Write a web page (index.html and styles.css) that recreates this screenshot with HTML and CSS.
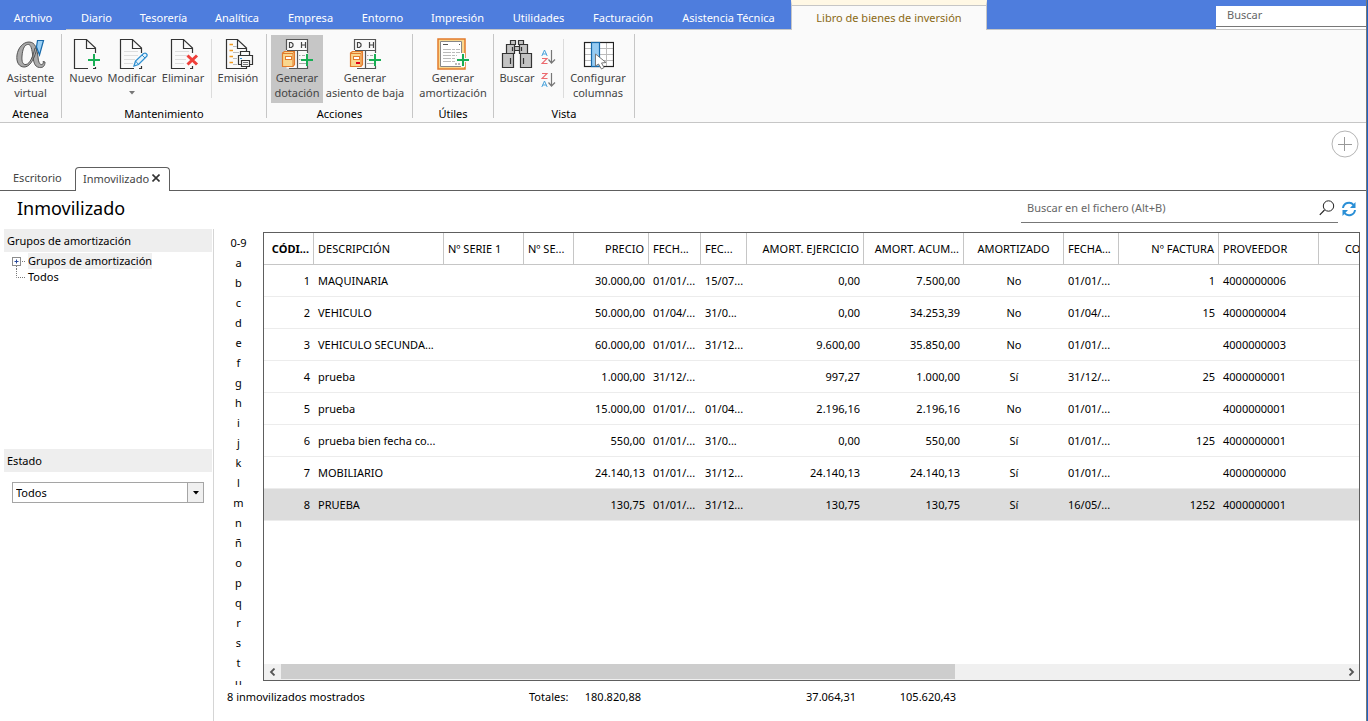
FILE: index.html
```html
<!DOCTYPE html>
<html lang="es">
<head>
<meta charset="utf-8">
<title>Inmovilizado</title>
<link rel="stylesheet" href="styles.css">
</head>
<body>
<svg class="defs" aria-hidden="true">
  <symbol id="page" viewBox="0 0 32 32"><path d="M25.5 15V10L16.5 1.5H4.5V30.5H18M25.5 28V30.5H23M16.5 2V10.5H25" fill="none" stroke="#333" stroke-width="1.2"/></symbol>
  <symbol id="page-lines" viewBox="0 0 32 32"><path d="M8 13.5H22M8 17.5H22M8 21.5H19M8 25.5H17" stroke="#ddd" fill="none"/></symbol>
  <symbol id="plus" viewBox="0 0 12 12"><path d="M6 0V12M0 6H12" stroke="#18ae54" stroke-width="2" fill="none"/></symbol>
  <symbol id="ledger" viewBox="0 0 32 32">
    <rect x="5.5" y="1.5" width="21" height="29" fill="#fafafa"/>
    <path d="M26.5 15V1.5H5.5V12M8 30.5H26.5V28M6 12.5H26M16.5 13V30" fill="none" stroke="#555" stroke-width="1.2"/>
    <path d="M18 17.5H19.5M18 21.5H19.5M18 25.5H25M21 17.5H24" stroke="#aaa" fill="none"/>
    <path d="M8.5 4.5V9.5H10.5L12 8V6L10.5 4.5ZM20.5 4V10M24.5 4V10M20.5 7H24.5" fill="none" stroke="#444" stroke-width="1.2"/>
    <path d="M1.5 15L3.5 13.5H13.5V26.5L12 28.5H1.5Z" fill="#f9d78f" stroke="#e27b2c" stroke-width="1.2"/>
    <path d="M1.5 15.5H12V28M12 15.5L13.5 13.5" fill="none" stroke="#e27b2c"/>
    <rect x="4.500" y="18.500" width="6" height="3" fill="#fff" stroke="#e27b2c"/>
  </symbol>
</svg>
<div class="app">
  <header class="menubar">
    <nav class="menu">
      <button class="file">Archivo</button><button>Diario</button><button>Tesorería</button><button>Analítica</button><button>Empresa</button><button>Entorno</button><button>Impresión</button><button>Utilidades</button><button>Facturación</button><button>Asistencia Técnica</button><button class="current">Libro de bienes de inversión</button>
    </nav>
    <div class="topsearch"><input type="text" placeholder="Buscar" aria-label="Buscar"></div>
  </header>

  <section class="ribbon">
    <div class="group">
      <div class="tools tools-atenea">
        <button class="tool"><svg viewBox="0 0 32 32"><path d="M22 10C20 19 16 28 10 29C4 29.500 1 24 2 17C3 10 8 4 14 4C20.500 4 22 11 23 19C23.500 25 25 27 27 26.500C28.500 26 28.500 24.500 28 23.500L30 24C30 28 28 30 24.500 29.500C19 29 18.500 23 17.500 16C16.500 9 15.500 6 12.500 6.500C9 7 7.500 12 7 18C6.500 24 8 27 11 26.500C15 26 18 18 20 10Z" fill="#aaa" stroke="#555"/><path d="M22.500 2.500H28.500L24.500 17L21.500 9Z" fill="#9bd0f5" stroke="#1769aa" stroke-width="1.200"/></svg><span>Asistente<br>virtual</span></button>
      </div>
      <h2>Atenea</h2>
    </div>
    <div class="group">
      <div class="tools tools-edit">
        <button class="tool"><svg viewBox="0 0 32 32"><use href="#page" width="32" height="32"/><path d="M17 22H31M24.500 15V29" stroke="#fafafa" stroke-width="5"/><use href="#plus" x="18" y="16" width="12" height="12"/></svg><span>Nuevo</span></button>
        <button class="tool"><svg viewBox="0 0 32 32"><use href="#page" width="32" height="32"/><use href="#page-lines" width="32" height="32"/><path d="M18 28L19.5 23L27.5 15.5Q30 14.5 31 16.5Q31.5 18 30 19L22.5 26.5Z" fill="#e6f3fb" stroke="#2f8fd0" stroke-width="1.3"/><path d="M19.5 23L22.5 26.5M26 17L29 20" stroke="#2f8fd0" fill="none"/></svg><span>Modificar</span><svg class="caret" viewBox="0 0 6 4"><path d="M0 0H6L3 3.5Z" fill="#777"/></svg></button>
        <button class="tool"><svg viewBox="0 0 32 32"><use href="#page" width="32" height="32"/><use href="#page-lines" width="32" height="32"/><path d="M20.5 17.5L30 26.5M30 17.5L20.5 26.5" stroke="#fafafa" stroke-width="5"/><path d="M20.5 17.5L30 26.5M30 17.5L20.5 26.5" stroke="#ef3f3a" stroke-width="3"/></svg><span>Eliminar</span></button>
        <i class="rule"></i>
        <button class="tool"><svg viewBox="0 0 32 32"><path d="M24.5 13V10L15.5 1.5H4.5V30.5H24.5V29M15.5 2V10.5H24" fill="none" stroke="#333" stroke-width="1.2"/><path d="M7.5 6.5H11M7.5 12.5H11M7.5 18.5H11M7.5 24.5H11" stroke="#f29a1f" stroke-width="1.3"/><path d="M11 8.5H15M11 14.5H17M11 20.5H15M11 26.5H15" stroke="#bbb"/><path d="M18.5 17.5V13.5H27.5V17.5M19 26.5H16.5V17.5H30.5V26.5H28M19.5 22.5H27.5V28.5H19.5Z" fill="#fafafa" stroke="#333" stroke-width="1.2"/><path d="M21 24.5H26M21 26.5H26" stroke="#777"/><path d="M18 20.5H20" stroke="#2f8fd0"/></svg><span>Emisión</span></button>
      </div>
      <h2>Mantenimiento</h2>
    </div>
    <div class="group">
      <div class="tools tools-actions">
        <button class="tool pressed"><svg viewBox="0 0 32 32"><use href="#ledger" width="32" height="32"/><use href="#plus" x="20" y="16" width="12" height="12"/></svg><span>Generar<br>dotación</span></button>
        <button class="tool"><svg viewBox="0 0 32 32"><use href="#ledger" width="32" height="32"/><rect x="7" y="24" width="4" height="2" fill="#e2001a"/><use href="#plus" x="20" y="16" width="12" height="12"/></svg><span>Generar<br>asiento de baja</span></button>
      </div>
      <h2>Acciones</h2>
    </div>
    <div class="group">
      <div class="tools tools-util">
        <button class="tool"><svg viewBox="0 0 32 32"><path d="M1 1H28V31H1Z" fill="#f9d78f" stroke="#e27b2c" stroke-width="1.5"/><path d="M3.5 3.5H24.5V28.5H3.5Z" fill="#fff" stroke="#888"/><path d="M6 6.5H11M22 6.5H23" stroke="#555"/><path d="M6 11.5H23M6 14.5H23M6 17.5H20M6 20.5H19M6 23.5H19" stroke="#bbb" stroke-dasharray="8 1 3 1"/><path d="M18 26H23" stroke="#bbb" stroke-width="2" stroke-dasharray="2 1"/><path d="M19 22H32M26 15V29" stroke="#fafafa" stroke-width="4"/><use href="#plus" x="20" y="16" width="12" height="12"/></svg><span>Generar<br>amortización</span></button>
      </div>
      <h2>Útiles</h2>
    </div>
    <div class="group">
      <div class="tools tools-view">
        <button class="tool"><svg viewBox="0 0 32 32"><g fill="#c3c3c3" stroke="#333" stroke-width="1.2"><path d="M9.500 2.500H14.500V6.500H9.500ZM17.500 2.500H22.500V6.500H17.500ZM13.500 8.500H18.500V12.500H13.500ZM5.500 6.500H13.500V15.500H5.500ZM18.500 6.500H26.500V15.500H18.500ZM1.500 15.500H12.500V29.500H1.500ZM19.500 15.500H30.500V29.500H19.500Z"/><path d="M9.500 20V26M22.500 20V26M11.500 9V13M20.500 9V13"/></g></svg><span>Buscar</span></button>
        <div class="sorts">
          <button aria-label="Orden ascendente"><svg viewBox="0 0 15 16"><path d="M.8 7L3.500 1L6.200 7M1.600 5H5.400" fill="none" stroke="#4ba3dc"/><path d="M1 9.500H6L1 14.500H6.500" fill="none" stroke="#ec6a6f" stroke-width="1.100"/><path d="M10.500 1V14M7.500 10.500L10.500 14L14 10.500" fill="none" stroke="#777" stroke-width="1.200"/></svg></button>
          <button aria-label="Orden descendente"><svg viewBox="0 0 15 16"><path d="M1 1.500H6L1 6.500H6.500" fill="none" stroke="#ec6a6f" stroke-width="1.100"/><path d="M.8 15L3.500 9L6.200 15M1.600 13H5.400" fill="none" stroke="#4ba3dc"/><path d="M10.500 1V14M7.500 10.500L10.500 14L14 10.500" fill="none" stroke="#777" stroke-width="1.200"/></svg></button>
        </div>
        <i class="rule"></i>
        <button class="tool"><svg viewBox="-1 0 32 32"><rect x="1.5" y="4.5" width="29" height="24" fill="#fff"/><path d="M2 10.5H30M2 16.5H30M2 22.5H30M15.5 5V28M23.5 5V28" stroke="#bbb" fill="none"/><rect x="1.500" y="4.500" width="29" height="24" fill="none" stroke="#222" stroke-width="1.2"/><rect x="8.500" y="4.500" width="8" height="24" fill="#96cbf2" stroke="#1769aa" stroke-width="1.2"/><path d="M12.5 16V28L15.5 26L18.5 31L21 29.5L18.5 25L23 24.5Z" fill="#fff" stroke="#777"/></svg><span>Configurar<br>columnas</span></button>
      </div>
      <h2>Vista</h2>
    </div>
  </section>

  <div class="tabs">
    <div class="tab">Escritorio</div>
    <div class="tab active">Inmovilizado<button aria-label="Cerrar"><svg viewBox="0 0 8 8"><path d="M.5 .5L7.5 7.5M7.5 .5L.5 7.5" stroke="#333" stroke-width="1.6"/></svg></button></div>
    <button class="add" aria-label="Añadir"><svg viewBox="0 0 28 28"><circle cx="14" cy="14" r="13" fill="none" stroke="#b5b5b5"/><path d="M13.5 7V21M7 14.5H21" stroke="#999"/></svg></button>
  </div>

  <div class="titlebar">
    <h1>Inmovilizado</h1>
    <div class="filesearch">
      <input type="text" placeholder="Buscar en el fichero (Alt+B)" aria-label="Buscar en el fichero">
      <button aria-label="Buscar en el fichero"><svg viewBox="0 0 16 16"><circle cx="9.5" cy="6" r="5.2" fill="none" stroke="#222"/><path d="M5.5 10L.8 14.8" stroke="#222" stroke-width="1.2"/></svg></button>
    </div>
    <button class="refresh" aria-label="Actualizar"><svg viewBox="0 0 16 16"><path d="M2 7A6 6 0 0 1 12.5 3.8M14 9A6 6 0 0 1 3.5 12.2" fill="none" stroke="#2a8fd6" stroke-width="2"/><path d="M14.5 1V7H9ZM1.5 15V9H7Z" fill="#2a8fd6"/></svg></button>
  </div>

  <main class="work">
    <aside class="side">
      <section class="side-groups">
        <h3>Grupos de amortización</h3>
        <ul class="tree">
          <li><svg viewBox="0 0 16 16"><path d="M10 8.5H14M4.5 13V16" stroke="#777" stroke-dasharray="1 1"/><rect x=".5" y="4.5" width="8" height="8" fill="#fff" stroke="#8c8c8c"/><path d="M2.5 8.5H6.5M4.5 6.5V10.5" stroke="#2a4a9a"/></svg><span class="picked">Grupos de amortización</span></li>
          <li><svg viewBox="0 0 16 16"><path d="M4.5 0V8.5H14" fill="none" stroke="#777" stroke-dasharray="1 1"/></svg><span>Todos</span></li>
        </ul>
      </section>
      <section>
        <h3><label for="estado">Estado</label></h3>
        <div class="combo"><select id="estado"><option>Todos</option></select><span class="drop"><svg viewBox="0 0 6 4"><path d="M0 0H6L3 3.5Z" fill="#000"/></svg></span></div>
      </section>
    </aside>

    <div class="content">
      <nav class="letters">
        <a href="#">0-9</a><a href="#">a</a><a href="#">b</a><a href="#">c</a><a href="#">d</a><a href="#">e</a><a href="#">f</a><a href="#">g</a><a href="#">h</a><a href="#">i</a><a href="#">j</a><a href="#">k</a><a href="#">l</a><a href="#">m</a><a href="#">n</a><a href="#">ñ</a><a href="#">o</a><a href="#">p</a><a href="#">q</a><a href="#">r</a><a href="#">s</a><a href="#">t</a><a href="#">u</a>
      </nav>
      <div class="gridbox">
        <div class="scroller">
        <table>
          <colgroup><col class="w50"><col class="w130"><col class="w80"><col class="w50"><col class="w75"><col class="w52"><col class="w46"><col class="w117"><col class="w100"><col class="w100"><col class="w55"><col class="w100"><col class="w100"><col></colgroup>
          <thead><tr><th class="r key">CÓDI...</th><th>DESCRIPCIÓN</th><th>Nº SERIE 1</th><th>Nº SE...</th><th class="r">PRECIO</th><th>FECH...</th><th>FEC...</th><th class="r">AMORT. EJERCICIO</th><th class="r">AMORT. ACUM...</th><th class="c">AMORTIZADO</th><th>FECHA...</th><th class="r">Nº FACTURA</th><th>PROVEEDOR</th><th class="cut">CO</th></tr></thead>
          <tbody>
            <tr><td class="r">1</td><td>MAQUINARIA</td><td></td><td></td><td class="r">30.000,00</td><td>01/01/...</td><td>15/07...</td><td class="r">0,00</td><td class="r">7.500,00</td><td class="c">No</td><td>01/01/...</td><td class="r">1</td><td>4000000006</td><td></td></tr>
            <tr><td class="r">2</td><td>VEHICULO</td><td></td><td></td><td class="r">50.000,00</td><td>01/04/...</td><td>31/0...</td><td class="r">0,00</td><td class="r">34.253,39</td><td class="c">No</td><td>01/04/...</td><td class="r">15</td><td>4000000004</td><td></td></tr>
            <tr><td class="r">3</td><td>VEHICULO SECUNDA...</td><td></td><td></td><td class="r">60.000,00</td><td>01/01/...</td><td>31/12...</td><td class="r">9.600,00</td><td class="r">35.850,00</td><td class="c">No</td><td>01/01/...</td><td></td><td>4000000003</td><td></td></tr>
            <tr><td class="r">4</td><td>prueba</td><td></td><td></td><td class="r">1.000,00</td><td>31/12/...</td><td></td><td class="r">997,27</td><td class="r">1.000,00</td><td class="c">Sí</td><td>31/12/...</td><td class="r">25</td><td>4000000001</td><td></td></tr>
            <tr><td class="r">5</td><td>prueba</td><td></td><td></td><td class="r">15.000,00</td><td>01/01/...</td><td>01/04...</td><td class="r">2.196,16</td><td class="r">2.196,16</td><td class="c">No</td><td>01/01/...</td><td></td><td>4000000001</td><td></td></tr>
            <tr><td class="r">6</td><td>prueba bien fecha co...</td><td></td><td></td><td class="r">550,00</td><td>01/01/...</td><td>31/0...</td><td class="r">0,00</td><td class="r">550,00</td><td class="c">Sí</td><td>01/01/...</td><td class="r">125</td><td>4000000001</td><td></td></tr>
            <tr><td class="r">7</td><td>MOBILIARIO</td><td></td><td></td><td class="r">24.140,13</td><td>01/01/...</td><td>31/12...</td><td class="r">24.140,13</td><td class="r">24.140,13</td><td class="c">Sí</td><td>01/01/...</td><td></td><td>4000000000</td><td></td></tr>
            <tr class="selected"><td class="r">8</td><td>PRUEBA</td><td></td><td></td><td class="r">130,75</td><td>01/01/...</td><td>31/12...</td><td class="r">130,75</td><td class="r">130,75</td><td class="c">Sí</td><td>16/05/...</td><td class="r">1252</td><td>4000000001</td><td></td></tr>
          </tbody>
        </table>
        </div>
        <div class="hscroll">
          <button aria-label="Izquierda"><svg viewBox="0 0 8 8"><path d="M5.5 .5L2 4L5.5 7.5" fill="none" stroke="#555" stroke-width="1.8"/></svg></button>
          <div class="track"><div class="thumb"></div></div>
          <button aria-label="Derecha"><svg viewBox="0 0 8 8"><path d="M2.5 .5L6 4L2.5 7.5" fill="none" stroke="#555" stroke-width="1.8"/></svg></button>
        </div>
      </div>
      <footer class="status">
        <span class="count">8 inmovilizados mostrados</span><span>Totales:</span><span>180.820,88</span><span>37.064,31</span><span>105.620,43</span>
      </footer>
    </div>
  </main>
</div>
</body>
</html>
```

FILE: styles.css
```css
* { box-sizing: border-box; }
body { margin: 0; font: 11px/15px "Noto Sans", "Open Sans", sans-serif; color: #000; background: #fff; }
h1, h2, h3, ul { margin: 0; padding: 0; font: inherit; list-style: none; }
button, input, select { font: inherit; color: inherit; border: 0; margin: 0; padding: 0; background: none; border-radius: 0; outline: 0; }
svg { display: block; }
.defs { position: absolute; width: 0; height: 0; }
.app { height: 100vh; display: flex; flex-direction: column; border-right: 1px solid #1f63c4; box-shadow: inset -1px 0 #777; padding-right: 1px; overflow: hidden; }

.menubar { display: flex; justify-content: space-between; height: 30px; background: #4e7ddd; box-shadow: inset 0 -1px #c6c6c6; }
.menu { display: grid; grid-template-columns: 66px 61px 73px 74px 73px 71px 79px 83px 86px 125px 196px; }
.menu button { padding-top: 4px; color: #fff; white-space: nowrap; }
.menu .file { background: #4e7ddd; }
.menu .current { background: #fafafa; color: #8a6914; border: 1px solid #c6c6c6; border-top: 5px solid #fff8e5; border-bottom: 0; box-shadow: inset 0 1px #c6c6c6; padding-top: 0; }
.topsearch { width: 150px; margin-top: 6px; height: 23px; background: #fff; }
.topsearch input { width: 100%; height: 21px; padding: 0 11px 4px; background: #fff; border-bottom: 1px solid #777; }
input::placeholder { color: #666; opacity: 1; }

.ribbon { display: flex; height: 93px; background: #fafafa; border-bottom: 1px solid #c6c6c6; }
.group { margin-top: 4px; height: 84px; display: flex; flex-direction: column; border-right: 1px solid #c6c6c6; }
.group h2 { margin-top: 3px; text-align: center; }
.tools { height: 69px; padding: 1px 4px 0; display: grid; color: #444; }
.tools-atenea { grid-template-columns: 53px; }
.tools-edit { grid-template-columns: 40px 52px 50px 6px 48px; }
.tools-actions { grid-template-columns: 52px 84px 1px; }
.tools-util { grid-template-columns: 72px; }
.tools-view { grid-template-columns: 38px 25px 5px 64px; }
.tool { height: 68px; padding-top: 3px; display: flex; flex-direction: column; align-items: center; white-space: nowrap; }
.tool svg { width: 32px; height: 32px; flex: none; }
.tool .caret { width: 6px; height: 4px; margin-top: 6px; }
.tool.pressed { background: #c6c6c6; }
.rule { width: 1px; height: 59px; margin: 4px auto 0; background: #dcdcdc; }
.sorts { padding: 14px 4px 0 5px; display: flex; flex-direction: column; gap: 7px; }
.sorts svg { width: 15px; height: 16px; }

.tabs { display: flex; align-items: flex-end; height: 68px; color: #444; border-bottom: 1px solid #5e5e5e; flex: none; }
.tab { height: 23px; padding: 3px 13px 0; width: 75px; }
.tab.active { width: 95px; height: 24px; margin-bottom: -1px; padding: 2px 7px 5px; display: flex; align-items: center; gap: 3px; background: #fff; border: 1px solid #5e5e5e; border-bottom: 0; border-radius: 4px 4px 0 0; white-space: nowrap; }
.tab svg { width: 8px; height: 8px; }
.add { margin: 0 7px 32px auto; }
.add svg { width: 28px; height: 28px; }

.titlebar { display: flex; height: 38px; flex: none; align-items: flex-start; padding-right: 9px; }
h1 { font-size: 18px; line-height: 24px; padding: 5px 17px; flex: 1; }
.filesearch { display: flex; align-items: center; width: 317px; height: 32px; border-bottom: 1px solid #777; padding: 3px 3px 0 6px; }
.filesearch input { flex: 1; height: 24px; padding-bottom: 2px; }
.filesearch svg, .refresh svg { width: 16px; height: 16px; }
.refresh { margin: 10px 0 0 3px; }

.work { flex: 1; min-height: 0; display: grid; grid-template-columns: 214px 1fr; }
.side { padding: 0 1px 0 4px; border-right: 1px solid #d5d5d5; }
.side h3 { height: 23px; padding: 4px 3px; background: #eee; }
.side-groups { height: 220px; }
.tree { padding: 1px 8px; }
.tree li { display: flex; height: 16px; }
.tree svg { width: 16px; height: 16px; }
.tree span { line-height: 16px; white-space: nowrap; }
.tree .picked { background: #f0f0f0; }
.combo { display: flex; margin: 10px 8px; height: 21px; border: 1px solid #a5a5a5; }
.combo select { flex: 1; appearance: none; padding: 0 3px; background: #fff; }
.drop { width: 16px; display: grid; place-items: center; background: #f0f0f0; border-left: 1px solid #a5a5a5; }
.drop svg { width: 6px; height: 4px; }

.content { min-width: 0; min-height: 0; display: grid; grid-template: minmax(0, 1fr) 40px / 49px minmax(0, 1fr); padding: 3px 6px 0 0; }
.letters { display: flex; flex-direction: column; margin-bottom: -4px; padding-top: 1px; overflow: hidden; }
.letters a { flex: none; height: 20px; line-height: 20px; text-align: center; color: #000; text-decoration: none; }
.gridbox { display: flex; flex-direction: column; border: 1px solid #5e5e5e; min-height: 0; }
.scroller { flex: 1; min-height: 0; overflow: hidden; }
table { width: 100%; table-layout: fixed; border-collapse: separate; border-spacing: 0; }
th, td { height: 32px; padding: 0 4px; text-align: left; font-weight: 400; white-space: nowrap; overflow: hidden; border-bottom: 1px solid #ececec; }
th { border-right: 1px solid #c6c6c6; border-bottom-color: #c6c6c6; }
th.key { font-weight: 700; }
th.cut { padding: 0 0 0 26px; border-right: 0; }
th.r, td.r { text-align: right; }
th.c, td.c { text-align: center; }
.selected td { background: #dcdcdc; }
.w46 { width: 46px; }
.w50 { width: 50px; }
.w52 { width: 52px; }
.w55 { width: 55px; }
.w75 { width: 75px; }
.w80 { width: 80px; }
.w100 { width: 100px; }
.w117 { width: 117px; }
.w130 { width: 130px; }
.hscroll { display: flex; height: 16px; background: #f0f0f0; flex: none; }
.hscroll button { width: 17px; display: grid; place-items: center; }
.hscroll svg { width: 8px; height: 8px; }
.track { flex: 1; }
.thumb { width: 63.5%; height: 15px; background: #cdcdcd; }
.status { grid-column: 1 / 3; display: grid; grid-template-columns: 290px 65px 72px 215px 100px; padding-top: 8px; text-align: right; }
.status .count { text-align: left; padding-left: 13px; }
.status span:nth-child(2) { text-align: left; padding-left: 25px; }
```
